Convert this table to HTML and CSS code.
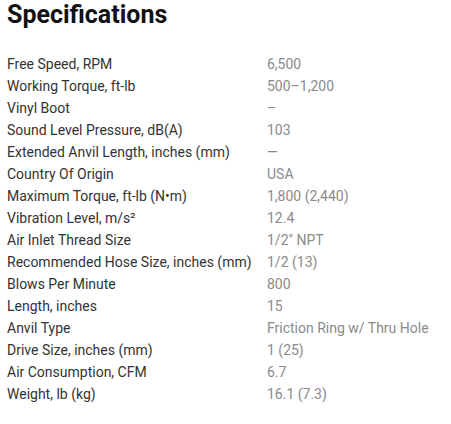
FILE: index.html
```html
<!DOCTYPE html>
<html>
<head>
<meta charset="utf-8">
<link rel="stylesheet" href="styles.css">
</head>
<body>
<section class="specs">
  <h2 class="title">Specifications</h2>
  <dl class="list">
    <div class="row"><dt>Free Speed, RPM</dt><dd>6,500</dd></div>
    <div class="row"><dt>Working Torque, ft-lb</dt><dd>500–1,200</dd></div>
    <div class="row"><dt>Vinyl Boot</dt><dd>–</dd></div>
    <div class="row"><dt>Sound Level Pressure, dB(A)</dt><dd>103</dd></div>
    <div class="row"><dt>Extended Anvil Length, inches (mm)</dt><dd>—</dd></div>
    <div class="row"><dt>Country Of Origin</dt><dd>USA</dd></div>
    <div class="row"><dt>Maximum Torque, ft-lb (N•m)</dt><dd>1,800 (2,440)</dd></div>
    <div class="row"><dt>Vibration Level, m/s²</dt><dd>12.4</dd></div>
    <div class="row"><dt>Air Inlet Thread Size</dt><dd>1/2" NPT</dd></div>
    <div class="row"><dt>Recommended Hose Size, inches (mm)</dt><dd>1/2 (13)</dd></div>
    <div class="row"><dt>Blows Per Minute</dt><dd>800</dd></div>
    <div class="row"><dt>Length, inches</dt><dd>15</dd></div>
    <div class="row"><dt>Anvil Type</dt><dd>Friction Ring w/ Thru Hole</dd></div>
    <div class="row"><dt>Drive Size, inches (mm)</dt><dd>1 (25)</dd></div>
    <div class="row"><dt>Air Consumption, CFM</dt><dd>6.7</dd></div>
    <div class="row"><dt>Weight, lb (kg)</dt><dd>16.1 (7.3)</dd></div>
  </dl>
</section>
</body>
</html>
```
FILE: styles.css
```css
html, body {
  margin: 0;
  padding: 0;
  background: #fff;
}
body {
  font-family: Roboto, "Liberation Sans", sans-serif;
}
.specs {
  padding: 1px 7px 0 7px;
}
.title {
  margin: 0;
  font-size: 25px;
  font-weight: 700;
  line-height: 28px;
  color: #111;
}
.list {
  margin: 24px 0 0 0;
  display: flex;
  flex-direction: column;
}
.row {
  display: grid;
  grid-template-columns: 260px 1fr;
  line-height: 22px;
  font-size: 14px;
}
.row dt {
  color: #333;
}
.row dd {
  margin: 0;
  color: #8a8a8a;
}
```
